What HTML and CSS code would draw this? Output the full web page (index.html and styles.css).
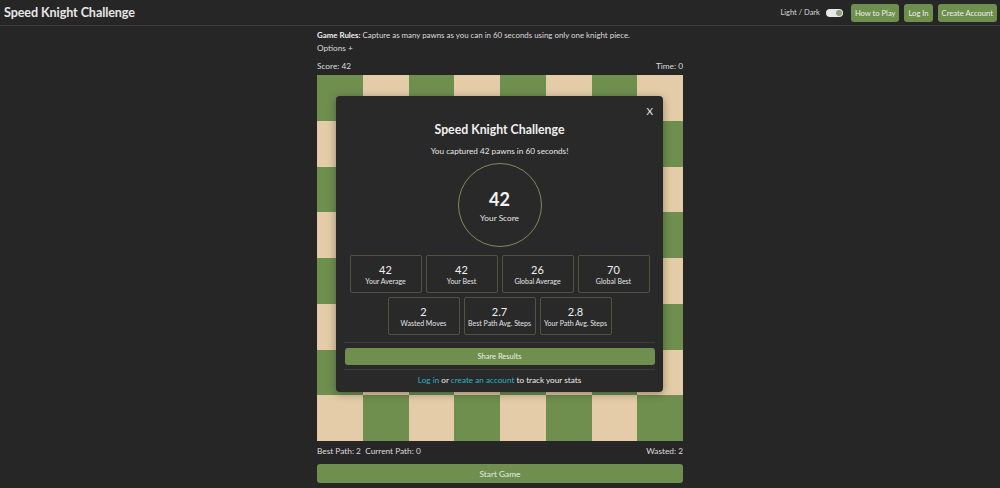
FILE: index.html
```html
<!DOCTYPE html>
<html lang="en">
<head>
<meta charset="utf-8">
<title>Speed Knight Challenge</title>
<link rel="stylesheet" href="styles.css">
</head>
<body>
<header class="topbar">
  <h1 class="brand">Speed Knight Challenge</h1>
  <div class="top-actions">
    <span class="theme-label">Light / Dark</span>
    <span class="toggle"><span class="knob"></span></span>
    <button class="btn-sm">How to Play</button>
    <button class="btn-sm">Log In</button>
    <button class="btn-sm">Create Account</button>
  </div>
</header>
<main class="game">
  <p class="rules"><b>Game Rules:</b> Capture as many pawns as you can in 60 seconds using only one knight piece.</p>
  <p class="options">Options +</p>
  <div class="info-row"><span>Score: 42</span><span>Time: 0</span></div>
  <div class="board-wrap">
    <div class="board" id="board"></div>
    <div class="modal">
      <span class="close">X</span>
      <h2 class="modal-title">Speed Knight Challenge</h2>
      <p class="modal-sub">You captured 42 pawns in 60 seconds!</p>
      <div class="score-circle">
        <span class="score-num">42</span>
        <span class="score-label">Your Score</span>
      </div>
      <div class="stats first">
        <div class="stat"><span class="stat-num">42</span><span class="stat-label">Your Average</span></div>
        <div class="stat"><span class="stat-num">42</span><span class="stat-label">Your Best</span></div>
        <div class="stat"><span class="stat-num">26</span><span class="stat-label">Global Average</span></div>
        <div class="stat"><span class="stat-num">70</span><span class="stat-label">Global Best</span></div>
      </div>
      <div class="stats">
        <div class="stat"><span class="stat-num">2</span><span class="stat-label">Wasted Moves</span></div>
        <div class="stat"><span class="stat-num">2.7</span><span class="stat-label">Best Path Avg. Steps</span></div>
        <div class="stat"><span class="stat-num">2.8</span><span class="stat-label">Your Path Avg. Steps</span></div>
      </div>
      <hr class="divider">
      <button class="share">Share Results</button>
      <hr class="divider tight">
      <p class="track"><a href="#">Log in</a> or <a href="#">create an account</a> to track your stats</p>
    </div>
  </div>
  <div class="info-row below"><span>Best Path: 2&nbsp;&nbsp;Current Path: 0</span><span>Wasted: 2</span></div>
  <button class="start">Start Game</button>
</main>
<script>
  var b = document.getElementById('board');
  for (var r = 0; r < 8; r++) {
    for (var c = 0; c < 8; c++) {
      var d = document.createElement('div');
      d.className = 'sq ' + ((r + c) % 2 === 0 ? 'dark' : 'light');
      b.appendChild(d);
    }
  }
</script>
</body>
</html>
```
FILE: styles.css
```css
* { box-sizing: border-box; }
html, body { margin: 0; padding: 0; }
body {
  background: #262626;
  color: #e2e2e2;
  font-family: Lato, "Open Sans", sans-serif;
  height: 488px;
  overflow: hidden;
}
.topbar {
  height: 26px;
  border-bottom: 1px solid #3b3b3b;
  display: flex;
  align-items: center;
  justify-content: space-between;
  padding: 0 3px 0 4px;
}
.brand {
  margin: 0;
  font-size: 12.6px;
  font-weight: 700;
  color: #e6e6e6;
  letter-spacing: -0.1px;
}
.top-actions {
  display: flex;
  align-items: center;
  gap: 5px;
}
.theme-label { font-size: 7.5px; color: #d8d8d8; margin-right: 1px; }
.toggle {
  width: 17px;
  height: 8px;
  border-radius: 4px;
  background: #e8e8e8;
  display: flex;
  justify-content: flex-end;
  align-items: center;
  padding: 1px;
  margin-right: 3px;
}
.knob { width: 6px; height: 6px; border-radius: 50%; background: #8fa17a; }
.btn-sm {
  height: 18px;
  padding: 0 4px;
  border: none;
  border-radius: 3px;
  background: #6e8f4e;
  color: #eef0ea;
  font-family: inherit;
  font-size: 7.6px;
}
.game {
  width: 366px;
  margin: 0 auto;
  padding-top: 3px;
}
.rules, .options {
  margin: 0;
  font-size: 7.9px;
  line-height: 12px;
  color: #dcdcdc;
}
.options { margin-top: 1px; font-size: 8.2px; }
.rules b { color: #f0f0f0; }
.info-row {
  display: flex;
  justify-content: space-between;
  font-size: 8.3px;
  line-height: 12px;
  margin-top: 6px;
  color: #dcdcdc;
}
.info-row.below { margin-top: 4px; }
.board-wrap {
  position: relative;
  margin-top: 3px;
  width: 366px;
  height: 366px;
}
.board {
  display: grid;
  grid-template-columns: repeat(8, 1fr);
  grid-template-rows: repeat(8, 1fr);
  width: 100%;
  height: 100%;
}
.sq.dark { background: #6e8f4e; }
.sq.light { background: #e4cca8; }
.modal {
  position: absolute;
  left: 19px;
  top: 21px;
  width: 327px;
  height: 296px;
  background: #292929;
  border-radius: 4px;
  box-shadow: 0 2px 8px rgba(0,0,0,0.35);
  padding: 25px 8px 0;
  display: flex;
  flex-direction: column;
  align-items: center;
}
.close {
  position: absolute;
  right: 10px;
  top: 9px;
  font-size: 10px;
  color: #f0f0f0;
}
.modal-title {
  margin: 0;
  font-size: 12.3px;
  line-height: 18px;
  font-weight: 700;
  color: #f0f0f0;
}
.modal-sub {
  margin: 6px 0 0;
  font-size: 8.2px;
  line-height: 12px;
  color: #e6e6e6;
}
.score-circle {
  margin-top: 6px;
  width: 84px;
  height: 84px;
  border-radius: 50%;
  border: 1px solid #7e8a5c;
  display: flex;
  flex-direction: column;
  align-items: center;
  padding-top: 25px;
}
.score-num {
  font-size: 18px;
  font-weight: 700;
  line-height: 20px;
  color: #f4f4f4;
}
.score-label {
  font-size: 8.3px;
  line-height: 12px;
  margin-top: 3px;
  color: #e6e6e6;
}
.stats {
  display: flex;
  justify-content: center;
  gap: 4px;
  margin-top: 4px;
}
.stats.first { margin-top: 8px; }
.stat {
  width: 72px;
  height: 38px;
  border: 1px solid #4f5344;
  border-radius: 2px;
  display: flex;
  flex-direction: column;
  align-items: center;
  padding-top: 7px;
}
.stat-num { font-size: 11px; line-height: 14px; color: #f0f0f0; }
.stat-label { font-size: 7px; line-height: 9px; color: #e4e4e4; }
.divider {
  width: 100%;
  margin: 7px 0 0;
  border: none;
  border-top: 1px solid #3c3c3c;
}
.share {
  margin-top: 5px;
  width: 310px;
  height: 17px;
  border: none;
  border-radius: 3px;
  background: #6e8f4e;
  color: #eef0ea;
  font-family: inherit;
  font-size: 7.5px;
}
.divider.tight { margin-top: 4px; }
.track {
  margin: 4px 0 0;
  font-size: 8.2px;
  line-height: 12px;
  color: #ececec;
}
.track a { color: #22b6c6; text-decoration: none; }
.start {
  display: block;
  margin-top: 7px;
  width: 100%;
  height: 19px;
  border: none;
  border-radius: 3px;
  background: #6e8f4e;
  color: #e8ebe4;
  font-family: inherit;
  font-size: 8.3px;
}
```
